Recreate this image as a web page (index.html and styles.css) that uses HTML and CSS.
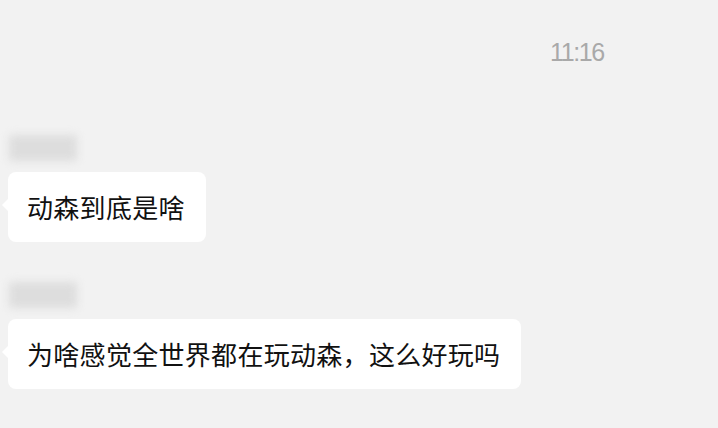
FILE: index.html
```html
<!DOCTYPE html>
<html lang="zh-CN">
<head>
    <meta charset="UTF-8">
    <meta name="viewport" content="width=device-width, initial-scale=1.0">
    <title>聊天</title>
    <link rel="stylesheet" href="styles.css">
</head>
<body>

    <div class="chat">
        <div class="time-row">
            <span class="time">11:16</span>
        </div>

        <div class="msg first">
            <div class="name"></div>
            <div class="bubble">动森到底是啥</div>
        </div>

        <div class="msg">
            <div class="name"></div>
            <div class="bubble">为啥感觉全世界都在玩动森，这么好玩吗</div>
        </div>
    </div>

</body>
</html>
```

FILE: styles.css
```css
body {
    margin: 0;
    background-color: #f2f2f2;
    font-family: "Noto Sans CJK SC", "Noto Sans", sans-serif;
    overflow: hidden;
}
.chat {
    display: flex;
    flex-direction: column;
    height: 428px;
}
.time-row {
    display: flex;
    padding-top: 37px;
    padding-left: 550px;
    height: 30px;
}
.time {
    font-family: "Liberation Sans", Arial, sans-serif;
    font-size: 25px;
    line-height: 30px;
    letter-spacing: -1.4px;
    color: #a9a9a9;
}
.msg {
    display: flex;
    flex-direction: column;
    align-items: flex-start;
    padding-left: 8px;
    margin-top: 40px;
}
.msg.first {
    margin-top: 68px;
}
.name {
    width: 68px;
    height: 26px;
    margin-left: 1px;
    background-color: #dddddd;
    border-radius: 3px;
    filter: blur(4px);
}
.bubble {
    position: relative;
    margin-top: 11px;
    background-color: #fff;
    border-radius: 8px;
    padding: 17px 21px 17px 19px;
    font-size: 26px;
    line-height: 36px;
    letter-spacing: 0.3px;
    color: #111;
}
.bubble::before {
    content: "";
    position: absolute;
    left: -6px;
    top: 27px;
    border-top: 6px solid transparent;
    border-bottom: 6px solid transparent;
    border-right: 6px solid #fff;
}
```
